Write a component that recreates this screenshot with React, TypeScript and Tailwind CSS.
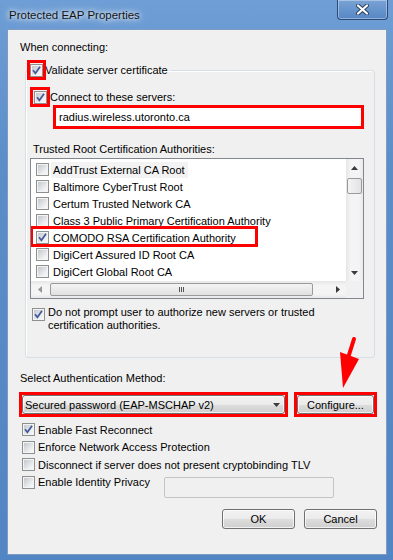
import type { ReactNode } from "react";

const certs = [
  { name: "AddTrust External CA Root", checked: false },
  { name: "Baltimore CyberTrust Root", checked: false },
  { name: "Certum Trusted Network CA", checked: false },
  { name: "Class 3 Public Primary Certification Authority", checked: false },
  { name: "COMODO RSA Certification Authority", checked: true },
  { name: "DigiCert Assured ID Root CA", checked: false },
  { name: "DigiCert Global Root CA", checked: false },
];

function Box({ checked = false }: { checked?: boolean }) {
  return (
    <span className="flex h-[13px] w-[13px] shrink-0 border border-[#8e8f8f] bg-[#f4f4f4] p-px">
      <span className="relative flex-1 bg-[linear-gradient(135deg,#c3c7cc,#eceef0_70%,#f8f8f8)]">
        {checked && (
          <svg className="absolute -left-[2px] -top-[2px]" width="13" height="13" viewBox="0 0 13 13">
            <path d="M3 6.3 L5.4 9.3 L10 2.8" stroke="#43589a" strokeWidth="1.7" fill="none" />
          </svg>
        )}
      </span>
    </span>
  );
}

function Tri({ dir }: { dir: "up" | "down" | "left" | "right" }) {
  const vert = dir === "up" || dir === "down";
  const pts = {
    up: "0,4 3.5,0 7,4",
    down: "0,0 7,0 3.5,4",
    left: "4,0 4,7 0,3.5",
    right: "0,0 0,7 4,3.5",
  }[dir];
  return (
    <svg width={vert ? 7 : 4} height={vert ? 4 : 7} viewBox={vert ? "0 0 7 4" : "0 0 4 7"}>
      <polygon points={pts} fill="#3a3a3a" />
    </svg>
  );
}

function Button({ children, className = "" }: { children: ReactNode; className?: string }) {
  return (
    <div
      className={
        "flex items-center justify-center rounded-[3px] border border-[#707070] bg-[linear-gradient(180deg,#f2f2f2_0%,#ebebeb_50%,#dddddd_51%,#cfcfcf_100%)] shadow-[inset_0_0_0_1px_rgba(255,255,255,0.7)] " +
        className
      }
    >
      {children}
    </div>
  );
}

function Row({ label, checked = false }: { label: string; checked?: boolean }) {
  return (
    <div className="flex h-[17.5px] items-center pl-[2px]">
      <Box checked={checked} />
      <span className="ml-[3px]">{label}</span>
    </div>
  );
}

export default function App() {
  return (
    <div className="relative h-[560px] w-[393px] overflow-hidden bg-[linear-gradient(180deg,#6e9ed5_0%,#5b8dc9_30%,#5285c3_100%)] font-['Liberation_Sans',Arial,sans-serif] text-[11px] leading-[16px] text-black">
      {/* title bar */}
      <div className="flex h-[29px] items-start justify-between">
        <span className="ml-[9px] mt-[8px] text-[11.5px] leading-[14px] text-[#151515] [text-shadow:0_0_5px_#fff,0_0_9px_rgba(255,255,255,0.9)]">
          Protected EAP Properties
        </span>
        <div className="mr-[5px] flex h-[20px] w-[51px] items-center justify-center rounded-b-[4px] border border-t-0 border-[#2c4c78] bg-[linear-gradient(180deg,#7aa3d6,#5586c4)] shadow-[inset_0_0_0_1px_rgba(255,255,255,0.35)]">
          <svg width="13" height="11" viewBox="0 0 13 11">
            <path d="M2 1.5 L11 9.5 M11 1.5 L2 9.5" stroke="#2b3f5e" strokeWidth="4" strokeLinecap="round" />
            <path d="M2 1.5 L11 9.5 M11 1.5 L2 9.5" stroke="#ffffff" strokeWidth="2.2" strokeLinecap="round" />
          </svg>
        </div>
      </div>

      {/* client area */}
      <div className="ml-[7px] flex h-[526px] w-[380px] flex-col border border-[#7f9cc0] bg-[#f0f0f0] pl-[12px] pr-[9px] pt-[9px]">
        <div>When connecting:</div>

        <fieldset className="ml-[5px] mt-[7px] w-[350px] rounded-[3px] border border-[#d5dfe5] shadow-[inset_1px_1px_0_#fff]">
          <legend className="ml-[4px] pr-[2px]">
            <span className="flex h-[16px] items-center">
              <span className="relative">
                <Box checked />
                <span className="absolute -bottom-[3px] -left-[3px] -right-[3px] -top-[4px] border-[3px] border-[#ff0000]" />
              </span>
              <span className="ml-[2px]">Validate server certificate</span>
            </span>
          </legend>

          <div className="pb-[25px] pl-[4px]">
            <div className="mt-[11px] flex h-[16px] items-center">
              <span className="relative ml-[4px]">
                <Box checked />
                <span className="absolute -bottom-[3px] -left-[4px] -right-[3px] -top-[4px] border-[3px] border-[#ff0000]" />
              </span>
              <span className="ml-[3px]">Connect to these servers:</span>
            </div>

            <div className="ml-[23px] flex h-[24px] w-[311px] items-center border-[3px] border-[#ff0000] bg-white pl-[3px]">
              radius.wireless.utoronto.ca
            </div>

            <div className="ml-[3px] mt-[12px]">Trusted Root Certification Authorities:</div>

            <div className="mt-[1px] flex h-[141px] w-[334px] flex-col border border-[#828790] bg-white">
              <div className="flex min-h-0 flex-1">
                <div className="min-w-0 flex-1 overflow-hidden pl-[5px] pt-[2px]">
                  {certs.map((c, i) => (
                    <div key={c.name} className="relative flex h-[17px] items-center whitespace-nowrap">
                      <Box checked={c.checked} />
                      <span className={"ml-[2px] pl-[2px] pr-[3px] " + (i === 0 ? "bg-[#f3f3f3]" : "")}>{c.name}</span>
                      {c.checked && (
                        <span className="absolute -left-[6px] -top-[3px] h-[21px] w-[228px] border-[3px] border-[#ff0000]" />
                      )}
                    </div>
                  ))}
                </div>
                {/* vertical scrollbar */}
                <div className="flex w-[17px] flex-col bg-[linear-gradient(90deg,#e6e6e6,#f4f4f4_25%,#f4f4f4_75%,#e9e9e9)]">
                  <div className="flex h-[17px] items-center justify-center">
                    <Tri dir="up" />
                  </div>
                  <div className="mx-px mt-[2px] flex h-[16px] items-center justify-center rounded-[2px] border border-[#9a9a9a] bg-[linear-gradient(90deg,#f4f4f4,#e2e2e2)]" />
                  <div className="flex-1" />
                  <div className="flex h-[17px] items-center justify-center">
                    <Tri dir="down" />
                  </div>
                </div>
              </div>
              {/* horizontal scrollbar */}
              <div className="flex h-[17px]">
                <div className="flex flex-1 items-center bg-[linear-gradient(180deg,#e6e6e6,#f4f4f4_25%,#f4f4f4_75%,#e9e9e9)]">
                  <div className="flex w-[17px] justify-center opacity-50">
                    <Tri dir="left" />
                  </div>
                  <div className="ml-[2px] flex h-[13px] w-[263px] items-center justify-center gap-[1px] rounded-[2px] border border-[#9a9a9a] bg-[linear-gradient(180deg,#f4f4f4,#e0e0e0)]">
                    <span className="h-[5px] w-px bg-[#555]" />
                    <span className="h-[5px] w-px bg-[#555]" />
                    <span className="h-[5px] w-px bg-[#555]" />
                  </div>
                  <div className="flex-1" />
                  <div className="flex w-[17px] justify-center">
                    <Tri dir="right" />
                  </div>
                </div>
                <div className="w-[17px] bg-[#f0f0f0]" />
              </div>
            </div>

            <div className="ml-[2px] mt-[7px] flex items-start">
              <span className="mt-[2px]">
                <Box checked />
              </span>
              <span className="ml-[3px] leading-[13px]">
                Do not prompt user to authorize new servers or trusted
                <br />
                certification authorities.
              </span>
            </div>
          </div>
        </fieldset>

        <div className="mt-[12px]">Select Authentication Method:</div>

        <div className="mt-[6px] flex">
          <div className="-ml-[1px] flex h-[25px] w-[270px] border-[3px] border-[#ff0000]">
            <Button className="flex-1 justify-between! pl-[2px] pr-[4px]">
              <span>Secured password (EAP-MSCHAP v2)</span>
              <Tri dir="down" />
            </Button>
          </div>
          <div className="ml-[6px] flex h-[25px] w-[83px] shrink-0 border-[3px] border-[#ff0000]">
            <Button className="flex-1">Configure...</Button>
          </div>
        </div>

        <div className="mt-[4px]">
          <Row label="Enable Fast Reconnect" checked />
          <Row label="Enforce Network Access Protection" />
          <Row label="Disconnect if server does not present cryptobinding TLV" />
          <div className="flex items-start">
            <div className="w-[144px]">
              <Row label="Enable Identity Privacy" />
            </div>
            <div className="mt-[3px] h-[21px] w-[170px] rounded-[2px] border border-[#c4c4c4] bg-[#f0f0f0]" />
          </div>
        </div>

        <div className="mt-[11px] flex justify-end gap-[9px]">
          <Button className="h-[20px] w-[73px]">OK</Button>
          <Button className="h-[20px] w-[73px]">Cancel</Button>
        </div>
      </div>

      {/* annotation arrow */}
      <svg className="absolute left-[330px] top-[334px]" width="35" height="58" viewBox="0 0 35 58">
        <path d="M24 5 L18 24" stroke="#ff0000" strokeWidth="4" strokeLinecap="round" />
        <polygon points="10,18 29,25 13,54" fill="#ff0000" />
      </svg>
    </div>
  );
}
